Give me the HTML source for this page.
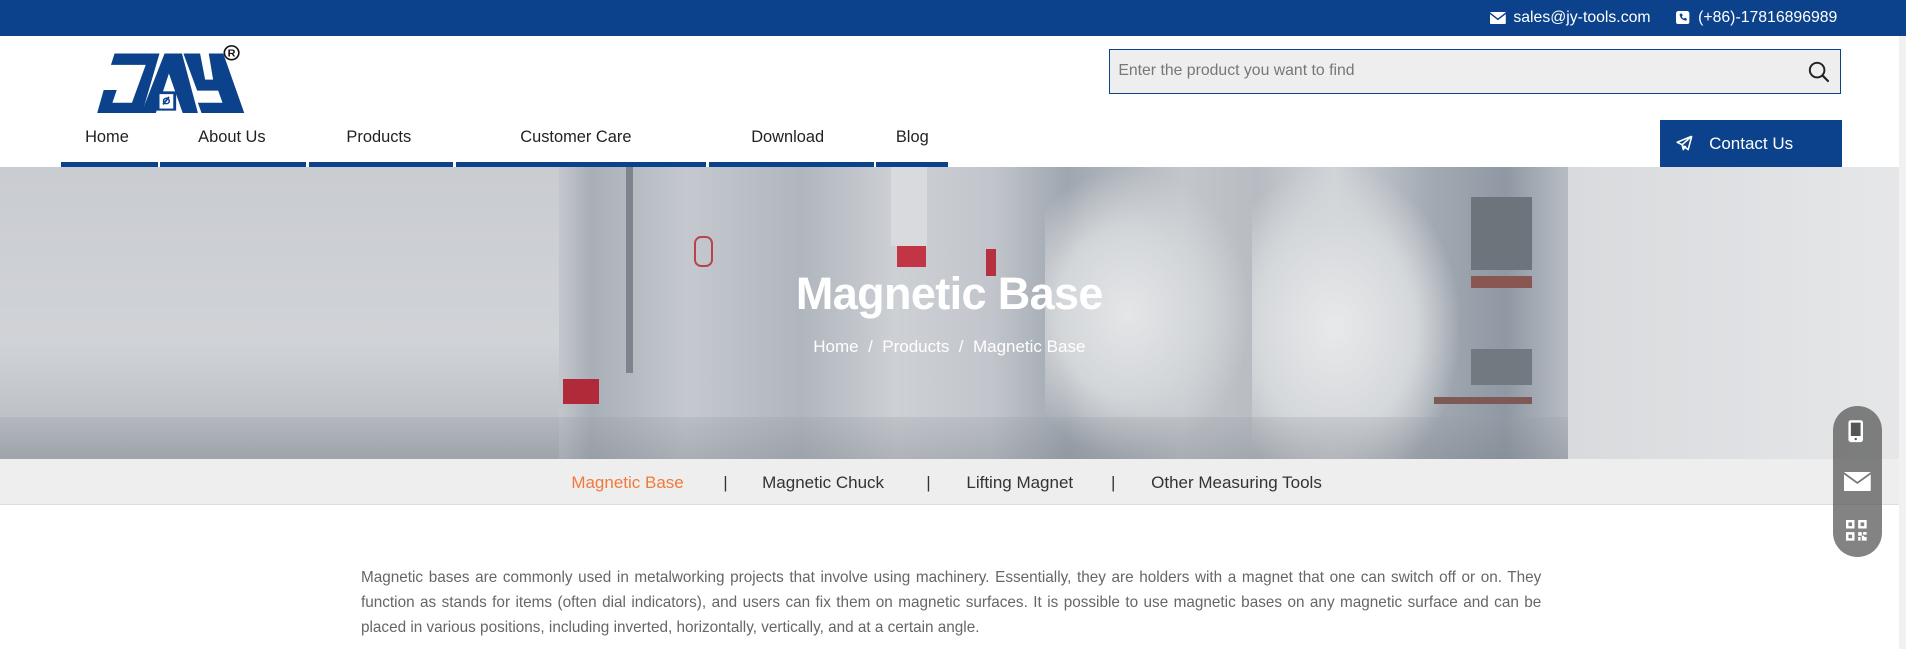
<!DOCTYPE html>
<html><head><meta charset="utf-8">
<style>
html,body{margin:0;padding:0;overflow:hidden;background:#fff}
body{width:1906px;height:649px}
#w{position:relative;width:1568px;height:534px;zoom:1.21556;font-family:"Liberation Sans",sans-serif;overflow:hidden;background:#fff}
.a{position:absolute;white-space:nowrap}
.top{left:0;top:0;width:1568px;height:30px;background:#0b428b}
.nav{top:105px;font-size:13.5px;color:#222}
.bar{top:133px;height:4px;background:#0b428b}
.hero{left:0;top:137px;width:1568px;height:241px;overflow:hidden;
background:linear-gradient(90deg,#c6cad0 0,#d3d6da 12%,#cfd2d6 26%,#c1c5cb 29.5%,#a9afb7 31%,#c5c9cf 36%,#b0b6bd 42%,#cdd0d5 47%,#c2c6cc 52%,#9fa6af 56%,#c3c7cc 62%,#b8bcc2 66%,#d0d3d7 70%,#a3aab3 75%,#8f98a3 79%,#b5bac1 82%,#cbced2 86%,#e3e5e7 92%,#dcdee1 100%)}
.sub{left:0;top:378px;width:1568px;height:37px;background:#eeeeee;border-bottom:1px solid #ddd}
.s{top:389px;font-size:14px;color:#333}
p{position:absolute;left:297px;top:466px;width:971px;margin:0;font-size:12.6px;line-height:20.3px;color:#666;text-align:justify}
</style></head><body><div id="w">
<div class="a top"></div>
<svg class="a" style="left:1226px;top:10px" width="13" height="10" viewBox="0 0 13 10"><rect width="13" height="10" rx="1" fill="#fff"/><path d="M0 1l6.5 5L13 1" stroke="#0b428b" stroke-width="1.2" fill="none"/></svg>
<div class="a" style="left:1245px;top:7px;font-size:13px;color:#fff">sales@jy-tools.com</div>
<svg class="a" style="left:1379px;top:9px" width="11" height="11" viewBox="0 0 11 11"><rect width="11" height="11" rx="2" fill="#fff"/><path d="M3 2.5c0 3 2.5 5.5 5.5 5.5l.5-1.5-1.5-1-1 .8C5.5 5.8 4.9 5.2 4.8 4.5l.8-1-1-1.5z" fill="#0b428b"/></svg>
<div class="a" style="left:1397px;top:7px;font-size:13px;color:#fff">(+86)-17816896989</div>

<svg class="a" style="left:61px;top:32px" width="152" height="68" viewBox="0 0 510 240" preserveAspectRatio="none">
<polygon points="112,42 236,42 188,215 64,215 82,148 118,148 106,185 160,185 198,75 102,75" fill="#0b428b"/>
<polygon points="250,42 298,42 342,215 186,215" fill="#0b428b"/>
<polygon points="262,100 226,215 300,215" fill="#fff"/>
<rect x="228" y="152" width="54" height="56" fill="#0b428b"/>
<rect x="236" y="160" width="38" height="42" fill="#fff"/>
<path d="M246 190l16-22" stroke="#0b428b" stroke-width="5"/><circle cx="255" cy="180" r="8" fill="none" stroke="#0b428b" stroke-width="4"/>
<polygon points="302,42 348,42 362,118 384,118 372,42 412,42 470,215 352,215 342,185 410,185 398,150 340,150" fill="#0b428b"/>
<circle cx="435" cy="40" r="20" fill="none" stroke="#111" stroke-width="4.5"/><text x="424" y="51" font-size="30" font-family="Liberation Sans" font-weight="bold" fill="#111">R</text>
</svg>

<div class="a" style="left:912px;top:40px;width:601px;height:36px;border:1px solid #0b428b;background:#eeeeee"></div>
<div class="a" style="left:920px;top:51px;font-size:13px;color:#777">Enter the product you want to find</div>
<svg class="a" style="left:1487px;top:50px" width="18" height="18" viewBox="0 0 18 18"><circle cx="7.5" cy="7.5" r="6" fill="none" stroke="#222" stroke-width="1.6"/><path d="M12 12l5 5" stroke="#222" stroke-width="1.8"/></svg>

<div class="a nav" style="left:70px">Home</div>
<div class="a nav" style="left:163px">About Us</div>
<div class="a nav" style="left:285px">Products</div>
<div class="a nav" style="left:428px">Customer Care</div>
<div class="a nav" style="left:618px">Download</div>
<div class="a nav" style="left:737px">Blog</div>
<div class="a bar" style="left:50px;width:80px"></div>
<div class="a bar" style="left:132px;width:120px"></div>
<div class="a bar" style="left:254px;width:119px"></div>
<div class="a bar" style="left:375px;width:206px"></div>
<div class="a bar" style="left:583px;width:136px"></div>
<div class="a bar" style="left:721px;width:59px"></div>

<div class="a" style="left:1366px;top:99px;width:149px;height:38px;background:#0b428b"></div>
<svg class="a" style="left:1379px;top:111px" width="14" height="13" viewBox="0 0 14 13"><path d="M13 1L1 6l4 2 1 4 2-3 M13 1L5 8 M13 1l-3 11-4-3" fill="none" stroke="#fff" stroke-width="1.3" stroke-linejoin="round"/></svg>
<div class="a" style="left:1406px;top:110px;font-size:14px;color:#fff">Contact Us</div>

<div class="a hero">
<div class="a" style="left:0;top:0;width:460px;height:241px;background:linear-gradient(180deg,#c9ccd1 0,#d0d3d7 60%,#b4b8be 100%)"></div>
<div class="a" style="left:515px;top:0;width:6px;height:170px;background:#7d848d"></div>
<div class="a" style="left:733px;top:0;width:30px;height:65px;background:#d8dadd"></div>
<div class="a" style="left:738px;top:65px;width:24px;height:18px;background:#c23544"></div>
<div class="a" style="left:811px;top:68px;width:8px;height:22px;background:#b63140"></div>
<div class="a" style="left:571px;top:57px;width:12px;height:22px;border:2px solid #b8434d;border-radius:6px"></div>
<div class="a" style="left:463px;top:175px;width:30px;height:20px;background:#b02a3a"></div>
<div class="a" style="left:860px;top:0;width:170px;height:241px;background:radial-gradient(ellipse at 40% 50%,#e4e6e8 0,#d3d6d9 40%,rgba(200,203,208,0) 70%)"></div>
<div class="a" style="left:1030px;top:0;width:170px;height:241px;background:radial-gradient(ellipse at 40% 55%,#e8e9eb 0,#d5d8db 45%,rgba(200,203,208,0) 72%)"></div>
<div class="a" style="left:1210px;top:25px;width:50px;height:60px;background:#6e747c"></div>
<div class="a" style="left:1210px;top:150px;width:50px;height:30px;background:#737980"></div>
<div class="a" style="left:1210px;top:90px;width:50px;height:10px;background:#8a5652"></div>
<div class="a" style="left:1180px;top:190px;width:80px;height:5px;background:#7d5a55"></div>
<div class="a" style="left:1290px;top:0;width:278px;height:241px;background:linear-gradient(90deg,#d8dadd,#e6e7e9)"></div>
<div class="a" style="left:0;top:206px;width:1290px;height:35px;background:linear-gradient(180deg,rgba(150,156,164,.25),rgba(120,126,134,.35))"></div>
<div class="a" style="left:0;top:83px;width:1568px;text-align:center;font-size:37px;font-weight:bold;color:#fff;letter-spacing:-.5px;line-height:44px;text-indent:-6px">Magnetic Base</div>
<div class="a" style="left:0;top:140px;width:1568px;text-align:center;font-size:14px;color:#fff;text-indent:-6px">Home &nbsp;/&nbsp; Products &nbsp;/&nbsp; Magnetic Base</div>
</div>

<div class="a sub"></div>
<div class="a s" style="left:470px;color:#f07a3a">Magnetic Base</div>
<div class="a s" style="left:595px">|</div>
<div class="a s" style="left:627px">Magnetic Chuck</div>
<div class="a s" style="left:762px">|</div>
<div class="a s" style="left:795px">Lifting Magnet</div>
<div class="a s" style="left:914px">|</div>
<div class="a s" style="left:947px">Other Measuring Tools</div>

<p>Magnetic bases are commonly used in metalworking projects that involve using machinery. Essentially, they are holders with a magnet that one can switch off or on. They function as stands for items (often dial indicators), and users can fix them on magnetic surfaces. It is possible to use magnetic bases on any magnetic surface and can be placed in various positions, including inverted, horizontally, vertically, and at a certain angle.</p>

<div class="a" style="left:1562px;top:30px;width:6px;height:504px;background:#f1f1f1"></div>
<div class="a" style="left:1508px;top:334px;width:40px;height:124px;border-radius:20px;background:rgba(90,90,90,.75)"></div>
<svg class="a" style="left:1519px;top:345px" width="16" height="20" viewBox="0 0 16 20"><rect x="2" y="1" width="12" height="18" rx="2" fill="#fff"/><rect x="4" y="3" width="8" height="11" fill="#555"/><circle cx="8" cy="16.5" r="1" fill="#555"/></svg>
<svg class="a" style="left:1517px;top:388px" width="22" height="16" viewBox="0 0 22 16"><rect width="22" height="16" rx="1" fill="#fff"/><path d="M0 1l11 8 11-8" stroke="#777" stroke-width="1.5" fill="none"/></svg>
<svg class="a" style="left:1519px;top:428px" width="17" height="17" viewBox="0 0 17 17" fill="#fff"><path d="M0 0h7v7H0zM2 2v3h3V2zM10 0h7v7h-7zM12 2v3h3V2zM0 10h7v7H0zM2 12v3h3v-3zM10 10h3v3h-3zM14 10h3v2h-3zM13 13h2v4h-2zM10 14h2v3h-2zM15 14h2v3h-2z"/></svg>
</div></body></html>
